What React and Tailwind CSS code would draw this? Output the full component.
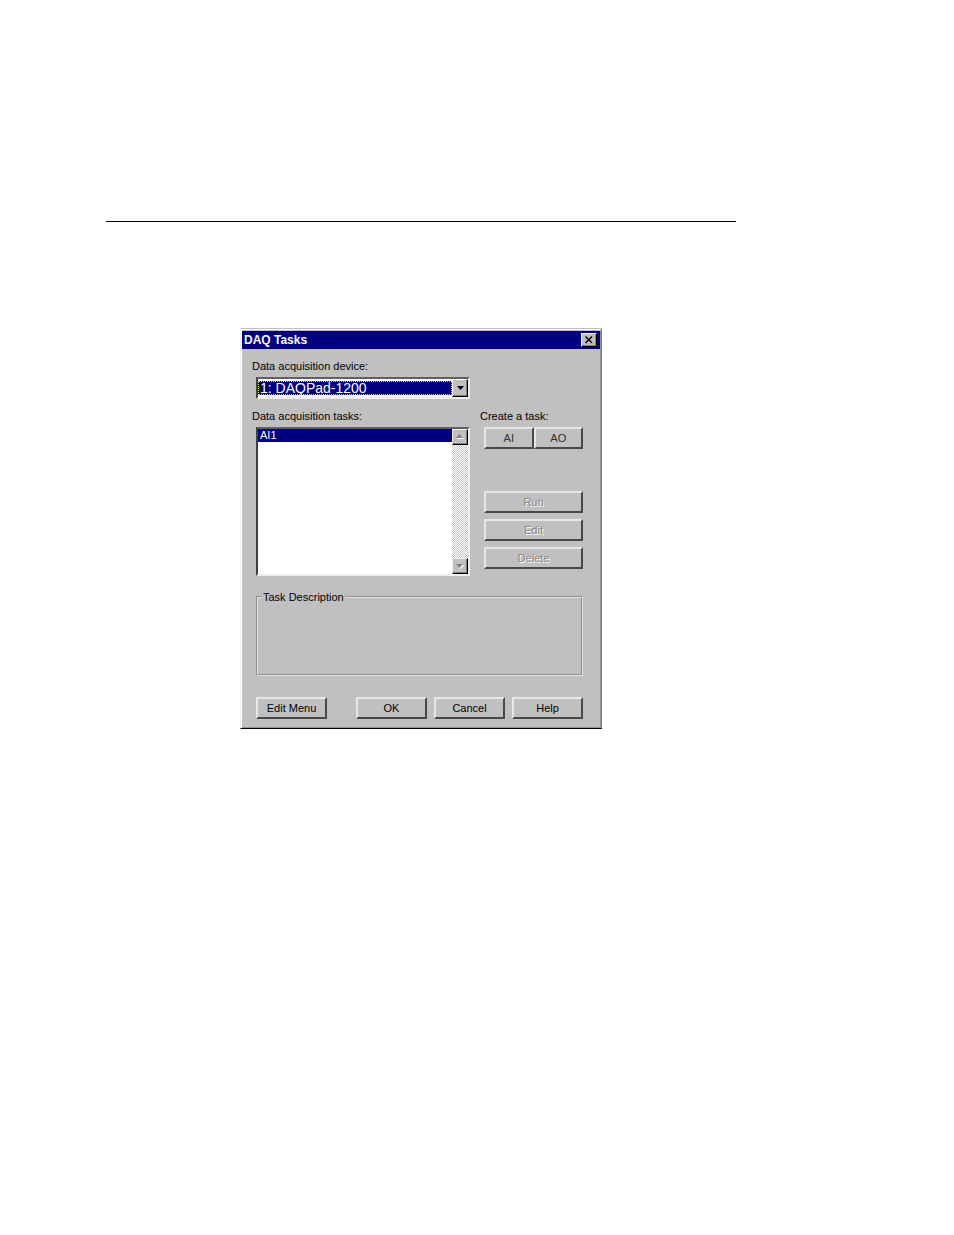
import React, { useState } from 'react';
import clsx from 'clsx';

const DEVICES = ['1: DAQPad-1200'];
const TASKS = ['AI1'];

function BevelButton({ className, children, ...props }) {
  return (
    <button
      type="button"
      className={clsx(
        'h-[22px] border-2 border-t-[#e6e6e6] border-l-[#e6e6e6] border-r-[#484848] border-b-[#484848] bg-[#c0c0c0] text-center leading-[18px] disabled:text-[#868686] disabled:[text-shadow:1px_1px_0_#fff]',
        className
      )}
      {...props}
    >
      {children}
    </button>
  );
}

function ScrollButton({ label, points }) {
  return (
    <button
      type="button"
      disabled
      aria-label={label}
      className="flex h-4 w-4 shrink-0 items-center justify-center border border-t-[#eeeeee] border-l-[#eeeeee] border-r-black border-b-black bg-[#c0c0c0] shadow-[inset_-1px_-1px_0_#808080]"
    >
      <svg viewBox="0 0 12 12" className="h-3 w-3">
        <polygon points={points} fill="#fff" transform="translate(1 1)" />
        <polygon points={points} fill="#808080" />
      </svg>
    </button>
  );
}

export default function App() {
  const [device, setDevice] = useState(DEVICES[0]);
  const [selectedTask, setSelectedTask] = useState(TASKS[0]);

  return (
    <div className="min-h-screen bg-white pt-[221px] font-['Liberation_Sans',Arial,sans-serif] text-[11px] text-black">
      <hr className="mr-[218px] ml-[106px] border-t border-black" />

      <main
        role="dialog"
        aria-labelledby="dialog-title"
        className="mt-[106px] ml-60 w-full max-w-[362px] border border-t-[#c0c0c0] border-r-[#808080] border-b-black border-l-[#f0f0f0] bg-[#c0c0c0] px-px pt-0.5 pb-[9px] shadow-[inset_1px_1px_0_#fff,inset_-1px_-1px_0_#909090]"
      >
        {/* Title bar */}
        <header className="flex h-[18px] items-center justify-between bg-[#000080] pr-[3px] pl-[2px]">
          <h1 id="dialog-title" className="text-xs font-bold text-white">
            DAQ Tasks
          </h1>
          <button
            type="button"
            aria-label="Close"
            className="flex h-[14px] w-4 items-center justify-center border border-t-white border-l-white border-r-black border-b-black bg-[#c0c0c0] shadow-[inset_-1px_-1px_0_#808080]"
          >
            <svg viewBox="0 0 8 8" className="h-2 w-2" stroke="#000" strokeWidth="1.5">
              <path d="M0.5 0.5 7 7M7 0.5 0.5 7" />
            </svg>
          </button>
        </header>

        <div className="pt-[9px] pr-[17px] pl-[14px]">
          {/* Device */}
          <label htmlFor="device" className="-ml-1 block leading-4">
            Data acquisition device:
          </label>
          <div className="mt-[3px] flex h-[22px] w-[214px] border-2 border-t-[#606060] border-l-[#404040] border-r-[#eeeeee] border-b-[#eeeeee] bg-white">
            <select
              id="device"
              value={device}
              onChange={(e) => setDevice(e.target.value)}
              className="my-0.5 min-w-0 flex-1 appearance-none bg-[#000080] pl-0.5 text-sm leading-[14px] text-white outline-1 -outline-offset-1 outline-[#d8d820] outline-dotted"
            >
              {DEVICES.map((name) => (
                <option key={name}>{name}</option>
              ))}
            </select>
            <span className="flex w-4 shrink-0 items-center justify-center border border-t-white border-l-white border-r-black border-b-black bg-[#c0c0c0] shadow-[inset_-1px_-1px_0_#808080]">
              <svg viewBox="0 0 7 4" className="h-1 w-[7px]">
                <polygon points="0,0 7,0 3.5,4" fill="#000" />
              </svg>
            </span>
          </div>

          {/* Tasks */}
          <div className="mt-[9px] flex gap-[14px]">
            <section className="w-[214px]">
              <h2 id="tasks-label" className="-ml-1 leading-4">
                Data acquisition tasks:
              </h2>
              <div className="mt-[3px] flex h-[149px] border-2 border-t-[#606060] border-l-[#404040] border-r-[#eeeeee] border-b-[#eeeeee] bg-white">
                <ul role="listbox" aria-labelledby="tasks-label" className="flex-1">
                  {TASKS.map((task) => (
                    <li
                      key={task}
                      role="option"
                      aria-selected={task === selectedTask}
                      onClick={() => setSelectedTask(task)}
                      className={clsx(
                        'h-[13px] px-0.5 leading-[13px]',
                        task === selectedTask && 'bg-[#000080] text-white'
                      )}
                    >
                      {task}
                    </li>
                  ))}
                </ul>
                <div className="flex w-4 flex-col justify-between bg-[repeating-conic-gradient(#ffffff_0_25%,#c8c8c8_0_50%)] bg-[length:2px_2px]">
                  <ScrollButton label="Scroll up" points="2,7 9,7 5.5,3" />
                  <ScrollButton label="Scroll down" points="2,4 9,4 5.5,8" />
                </div>
              </div>
            </section>

            <section className="min-w-0 flex-1">
              <h2 className="-ml-1 leading-4">Create a task:</h2>
              <div className="mt-[3px] flex text-[#303030]">
                <BevelButton className="flex-1">AI</BevelButton>
                <BevelButton className="flex-1">AO</BevelButton>
              </div>
              <div className="mt-[42px] flex flex-col gap-[6px]">
                <BevelButton disabled>Run</BevelButton>
                <BevelButton disabled>Edit</BevelButton>
                <BevelButton disabled>Delete</BevelButton>
              </div>
            </section>
          </div>

          {/* Description */}
          <fieldset className="mt-[15px] h-[85px] border-2 border-[#e4e4e4] [border-style:groove] pl-[4px]">
            <legend className="px-px leading-3">Task Description</legend>
          </fieldset>

          <footer className="mt-[21px] flex justify-between">
            <BevelButton className="w-[71px]">Edit Menu</BevelButton>
            <div className="flex gap-[7px]">
              <BevelButton className="w-[71px]">OK</BevelButton>
              <BevelButton className="w-[71px]">Cancel</BevelButton>
              <BevelButton className="w-[71px]">Help</BevelButton>
            </div>
          </footer>
        </div>
      </main>
    </div>
  );
}
